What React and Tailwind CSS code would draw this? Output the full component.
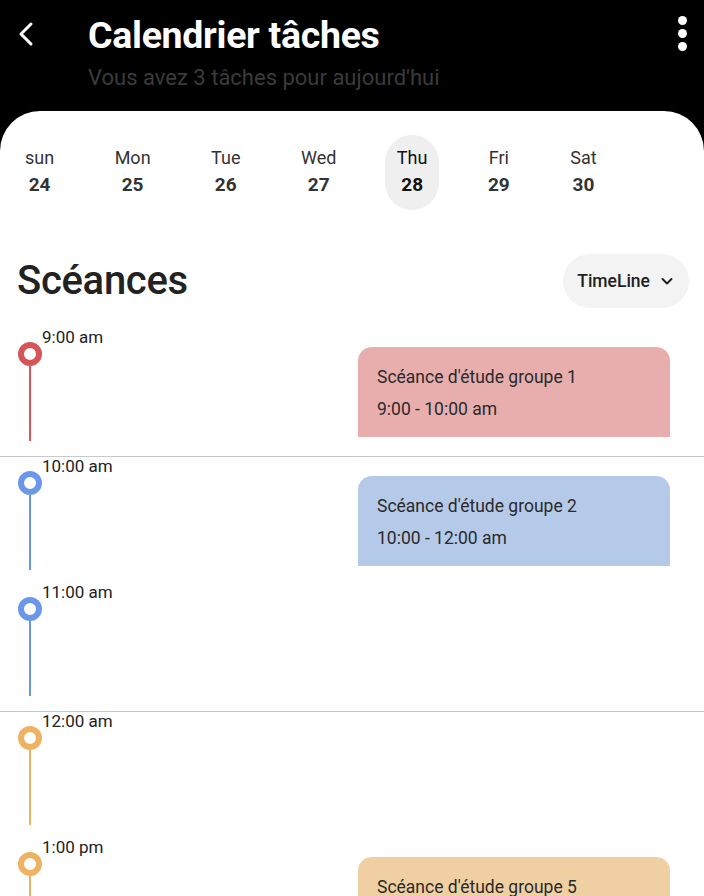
import React, { useState } from "react";

const days = [
  { label: "sun", num: 24 },
  { label: "Mon", num: 25 },
  { label: "Tue", num: 26 },
  { label: "Wed", num: 27 },
  { label: "Thu", num: 28 },
  { label: "Fri", num: 29 },
  { label: "Sat", num: 30 },
];

const slots = [
  { time: "9:00 am", color: "red", divider: false, card: { title: "Scéance d'étude groupe 1", range: "9:00 - 10:00 am", bg: "bg-[#e8aeae]" } },
  { time: "10:00 am", color: "blue", divider: true, card: { title: "Scéance d'étude groupe 2", range: "10:00 - 12:00 am", bg: "bg-[#b5c9e8]" } },
  { time: "11:00 am", color: "blue", divider: false },
  { time: "12:00 am", color: "orange", divider: true },
  { time: "1:00 pm", color: "orange", divider: false, card: { title: "Scéance d'étude groupe 5", range: "1:00 - 2:00 pm", bg: "bg-[#f0d0a3]" } },
];

const dotStyles = {
  red: { ring: "border-[#d6545a]", line: "bg-[#d6545a]" },
  blue: { ring: "border-[#6a97ea]", line: "bg-[#6a97ea]" },
  orange: { ring: "border-[#efb262]", line: "bg-[#efb262]" },
};

const TimeSlot = ({ slot }) => {
  const c = dotStyles[slot.color];
  return (
    <div className={`h-[127.5px] ${slot.divider ? "border-t border-[#c9c9c9]" : ""}`}>
      <div className="flex h-full">
        <div className="flex flex-col items-center w-[24px] ml-[18px] pt-[14px]">
          <div className={`w-[24px] h-[24px] rounded-full border-[6px] ${c.ring} bg-white shrink-0`} />
          <div className={`w-[2.5px] h-[75px] ${c.line}`} />
        </div>
        <div className="text-[17px] leading-[20px] text-[#222] -mt-[1px]">{slot.time}</div>
        {slot.card && (
          <div className={`ml-auto mr-[34px] mt-[19px] w-[312px] h-[90px] rounded-t-[14px] ${slot.card.bg} px-[19px] pt-[20px]`}>
            <p className="text-[17.5px] leading-[20px] text-[#2a2a2a]">{slot.card.title}</p>
            <p className="text-[17.5px] leading-[20px] text-[#2a2a2a] mt-[12px]">{slot.card.range}</p>
          </div>
        )}
      </div>
    </div>
  );
};

const App = () => {
  const [selected, setSelected] = useState(28);

  return (
    <div className="w-[704px] h-[896px] overflow-hidden bg-black" style={{ fontFamily: "Roboto, 'Noto Sans', sans-serif" }}>
      {/* header */}
      <div className="h-[111px]">
        <div className="flex items-start pt-[14px]">
          <button className="w-[88px] h-[40px] flex items-center pl-[14px] text-white">
            <svg width="24" height="28" viewBox="0 0 24 28" fill="none" stroke="white" strokeWidth="3" strokeLinecap="round" strokeLinejoin="round">
              <path d="M17 4 L7 14 L17 24" />
            </svg>
          </button>
          <div>
            <h1 className="text-white text-[37.5px] leading-[42px] font-bold tracking-[-0.3px]">Calendrier tâches</h1>
            <p className="text-[#3b3b3b] text-[22px] leading-[26px] mt-[9px]">Vous avez 3 tâches pour aujourd'hui</p>
          </div>
          <button className="ml-auto mr-[12px] mt-[2px] flex flex-col items-center gap-[4px] w-[20px]">
            <span className="w-[9px] h-[9px] rounded-full bg-white" />
            <span className="w-[9px] h-[9px] rounded-full bg-white" />
            <span className="w-[9px] h-[9px] rounded-full bg-white" />
          </button>
        </div>
      </div>

      {/* body */}
      <div className="bg-white rounded-t-[40px] h-[785px]">
        <div className="flex gap-[36.5px] pl-[13px] pt-[24px]">
          {days.map((d) => (
            <button
              key={d.num}
              onClick={() => setSelected(d.num)}
              className={`flex flex-col items-center px-3 h-[75px] pt-[12px] rounded-[27px] ${selected === d.num ? "bg-[#efefef] text-[#111]" : "text-[#333]"}`}
            >
              <span className="text-[18px] leading-[21px]">{d.label}</span>
              <span className="text-[19px] leading-[22px] font-bold mt-[6px]">{d.num}</span>
            </button>
          ))}
        </div>

        <div className="flex items-center justify-between pl-[17px] pr-[15px] mt-[44px]">
          <h2 className="text-[40px] leading-[46px] font-medium text-[#222] tracking-[-0.3px]">Scéances</h2>
          <button className="flex items-center gap-[9px] h-[54px] pl-[14px] pr-[14px] rounded-[27px] bg-[#f3f3f3] text-[#222]">
            <span className="text-[17.5px] font-medium">TimeLine</span>
            <svg width="16" height="16" viewBox="0 0 16 16" fill="none" stroke="#222" strokeWidth="2" strokeLinecap="round" strokeLinejoin="round">
              <path d="M3.5 6 L8 10.5 L12.5 6" />
            </svg>
          </button>
        </div>

        <div className="mt-[20px]">
          {slots.map((s) => (
            <TimeSlot key={s.time} slot={s} />
          ))}
        </div>
      </div>
    </div>
  );
};

export default App;
